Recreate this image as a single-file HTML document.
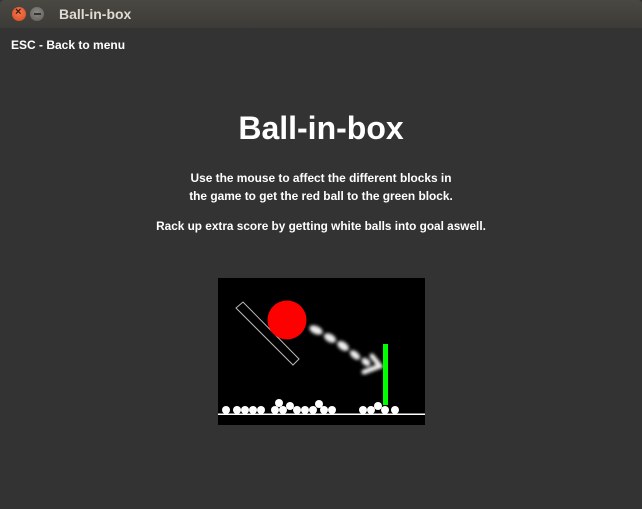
<!DOCTYPE html>
<html><head><style>
html,body{margin:0;padding:0;width:642px;height:509px;overflow:hidden;background:#333;font-family:"Liberation Sans",sans-serif;}
#tb{position:absolute;left:0;top:0;width:642px;height:28px;background:linear-gradient(#4a4842,#3c3b37);border-radius:4px 4px 0 0;}
.btn{position:absolute;top:7px;width:14px;height:14px;border-radius:50%;}
#tt{position:absolute;left:59px;top:6px;color:#dfdbd2;font-weight:bold;font-size:14px;}
.t{position:absolute;left:0;width:642px;text-align:center;color:#fff;font-weight:bold;}
</style></head><body>
<div id="tb">
<div class="btn" style="left:12px;background:radial-gradient(circle at 50% 40%,#f47a50,#d9471c);"></div>
<div style="position:absolute;left:15px;top:6px;color:#3a1a10;font-size:11px;font-weight:bold">×</div>
<div class="btn" style="left:30px;background:radial-gradient(circle at 50% 40%,#8a8984,#5d5c58);"></div>
<div style="position:absolute;left:34px;top:13px;width:7px;height:2px;background:#333"></div>
<div id="tt">Ball-in-box</div>
</div>
<div style="position:absolute;left:11px;top:38px;color:#fff;font-weight:bold;font-size:12px">ESC - Back to menu</div>
<div class="t" style="top:110px;font-size:32px">Ball-in-box</div>
<div class="t" style="top:169px;font-size:11.9px;line-height:18px">Use the mouse to affect the different blocks in<br>the game to get the red ball to the green block.</div>
<div class="t" style="top:219px;font-size:11.8px;line-height:14px">Rack up extra score by getting white balls into goal aswell.</div>
<svg style="position:absolute;left:218px;top:278px" width="207" height="147" viewBox="218 278 207 147">
<defs><filter id="b"><feGaussianBlur stdDeviation="1.5"/></filter></defs>
<rect x="218" y="278" width="207" height="147" fill="#000"/>
<polygon points="236,308 243,302 299,359 293,365" fill="none" stroke="#bbb" stroke-width="1"/>
<circle cx="287" cy="320" r="19.5" fill="#f00"/>
<g filter="url(#b)" fill="#eee">
<ellipse cx="316" cy="330" rx="7" ry="4" transform="rotate(25 316 330)"/>
<ellipse cx="330" cy="338" rx="6.5" ry="4" transform="rotate(30 330 338)"/>
<ellipse cx="343" cy="346" rx="6.5" ry="4" transform="rotate(35 343 346)"/>
<ellipse cx="355" cy="355" rx="6" ry="3.5" transform="rotate(40 355 355)"/>
<ellipse cx="366" cy="362" rx="5" ry="3.5" transform="rotate(40 366 362)"/>
<polyline points="372,356 380,366 364,372" fill="none" stroke="#eee" stroke-width="5" stroke-linecap="round"/>
</g>
<rect x="383" y="344" width="5" height="61" fill="#0f0"/>
<rect x="218" y="413.5" width="207" height="1.5" fill="#fff"/>
<g fill="#fff">
<circle cx="226" cy="410" r="4"/><circle cx="237" cy="410" r="4"/><circle cx="245" cy="410" r="4"/><circle cx="253" cy="410" r="4"/><circle cx="261" cy="410" r="4"/>
<circle cx="275" cy="410" r="4"/><circle cx="283" cy="410" r="4"/><circle cx="279" cy="403" r="4"/><circle cx="290" cy="406" r="4"/>
<circle cx="297" cy="410" r="4"/><circle cx="305" cy="410" r="4"/><circle cx="313" cy="410" r="4"/><circle cx="319" cy="404" r="4"/><circle cx="324" cy="410" r="4"/><circle cx="332" cy="410" r="4"/>
<circle cx="363" cy="410" r="4"/><circle cx="371" cy="410" r="4"/><circle cx="378" cy="406" r="4"/><circle cx="385" cy="410" r="4"/><circle cx="395" cy="410" r="4"/>
</g>
</svg>
</body></html>
